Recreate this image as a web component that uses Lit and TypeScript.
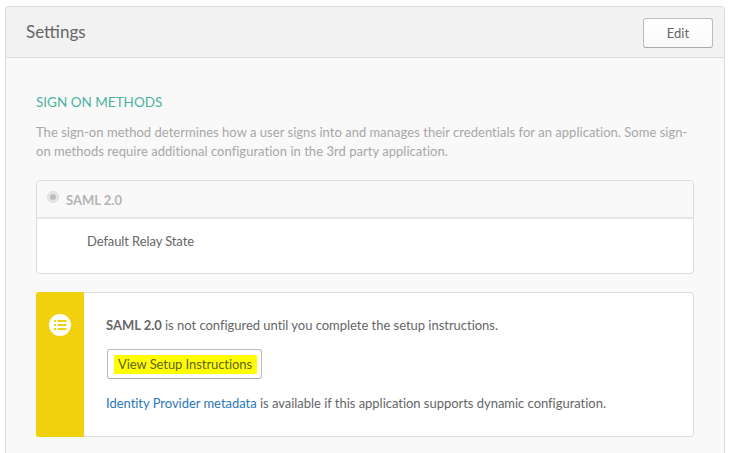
import { LitElement, html, css } from "lit";
import { customElement } from "lit/decorators.js";

@customElement("app-root")
export class AppRoot extends LitElement {
  static styles = css`
    :host {
      display: block;
      width: 735px;
      height: 453px;
      overflow: hidden;
      background: #fff;
      font-family: "Lato", "Liberation Sans", sans-serif;
      font-size: 13px;
      color: #666;
      box-sizing: border-box;
      padding: 6px 10px 0 5px;
    }
    .panel {
      width: 720px;
      border: 1px solid #dcdcdc;
      border-bottom: none;
      border-radius: 4px 4px 0 0;
      background: #f9f9f9;
      height: 460px;
      box-sizing: border-box;
    }
    .head {
      height: 51px;
      box-sizing: border-box;
      background: #f2f2f2;
      border-bottom: 1px solid #dcdcdc;
      border-radius: 3px 3px 0 0;
      display: flex;
      align-items: center;
      justify-content: space-between;
      padding: 0 11px 0 20px;
    }
    .title { font-size: 17px; color: #666; line-height: 20px; margin-top: -1px; }
    .edit {
      width: 70px;
      height: 30px;
      box-sizing: border-box;
      border: 1px solid #bbb;
      border-bottom-color: #aaa;
      border-radius: 3px;
      background: linear-gradient(#ffffff, #f9f9f9);
      font: inherit;
      color: #666;
      padding: 0;
      margin-top: 1px;
    }
    .body { padding: 35px 30px 0 30px; }
    h2 {
      margin: 0;
      font-size: 13.5px;
      font-weight: 400;
      line-height: 18px;
      color: #4cb2a0;
    }
    .desc {
      margin: 12px 0 0;
      color: #a7a7a7;
      line-height: 19px;
      letter-spacing: 0.03px;
    }
    .method {
      margin-top: 19px;
      height: 94px;
      box-sizing: border-box;
      border: 1px solid #dcdcdc;
      border-radius: 4px;
      background: #fff;
      overflow: hidden;
    }
    .method-head {
      height: 38px;
      box-sizing: border-box;
      background: #f9f9f9;
      border-bottom: 2px solid #e4e4e4;
      display: flex;
      align-items: center;
      gap: 8px;
      padding: 1px 0 0 10px;
      color: #b4b4b4;
      font-weight: 700;
    }
    .radio {
      width: 12px;
      height: 12px;
      box-sizing: border-box;
      border-radius: 50%;
      background: #e6e6e6;
      border: 1px solid #dedede;
      display: flex;
      align-items: center;
      justify-content: center;
      margin-top: -5px;
      margin-right: -1px;
    }
    .radio i { width: 6px; height: 6px; border-radius: 50%; background: #bdbdbd; display: block; }
    .relay { padding: 13px 0 0 50px; line-height: 18px; color: #666; letter-spacing: -0.1px; }
    .notice {
      margin-top: 18px;
      height: 145px;
      box-sizing: border-box;
      display: flex;
      border: 1px solid #dcdcdc;
      border-left: none;
      border-radius: 4px;
      background: #fff;
    }
    .stripe {
      width: 48px;
      flex: none;
      background: #f1d10d;
      border-radius: 3px 0 0 3px;
      margin: -1px 0 -1px 0;
      display: flex;
      justify-content: center;
      padding-top: 22px;
      box-sizing: border-box;
    }
    .stripe svg { display: block; }
    .content { padding: 23px 0 0 22px; }
    .line { margin: 0; line-height: 18px; letter-spacing: -0.03px; }
    .line b { font-weight: 700; }
    .setup {
      margin: 15px 0 0 1px;
      width: 155px;
      height: 30px;
      box-sizing: border-box;
      border: 1px solid #bbb;
      border-bottom-color: #aaa;
      border-radius: 3px;
      background: #fff;
      display: flex;
      align-items: center;
      justify-content: flex-start;
      font: inherit;
      padding: 0 0 0 6px;
      color: #666;
    }
    .setup span {
      background: #ffff00;
      padding: 0 5px 0 4px;
      line-height: 19px;
      color: #5f5f25;
      letter-spacing: -0.07px;
    }
    .meta { margin-top: 15px; }
    a { color: #2a77b8; text-decoration: none; }
  `;

  render() {
    return html`
      <div class="panel">
        <div class="head">
          <span class="title">Settings</span>
          <button class="edit">Edit</button>
        </div>
        <div class="body">
          <h2>SIGN ON METHODS</h2>
          <p class="desc">The sign-on method determines how a user signs into and manages their credentials for an application. Some sign-on methods require additional configuration in the 3rd party application.</p>
          <div class="method">
            <div class="method-head"><span class="radio"><i></i></span>SAML 2.0</div>
            <div class="relay">Default Relay State</div>
          </div>
          <div class="notice">
            <div class="stripe">
              <svg width="22" height="22" viewBox="0 0 22 22">
                <circle cx="11" cy="11" r="11" fill="#fff"></circle>
                <g fill="#f1d10d">
                  <rect x="5" y="6" width="2" height="2"></rect>
                  <rect x="5" y="10" width="2" height="2"></rect>
                  <rect x="5" y="14" width="2" height="2"></rect>
                  <rect x="8.5" y="6" width="9" height="2"></rect>
                  <rect x="8.5" y="10" width="9" height="2"></rect>
                  <rect x="8.5" y="14" width="9" height="2"></rect>
                </g>
              </svg>
            </div>
            <div class="content">
              <p class="line"><b>SAML 2.0</b> is not configured until you complete the setup instructions.</p>
              <button class="setup"><span>View Setup Instructions</span></button>
              <p class="line meta"><a>Identity Provider metadata</a> is available if this application supports dynamic configuration.</p>
            </div>
          </div>
        </div>
      </div>
    `;
  }
}
